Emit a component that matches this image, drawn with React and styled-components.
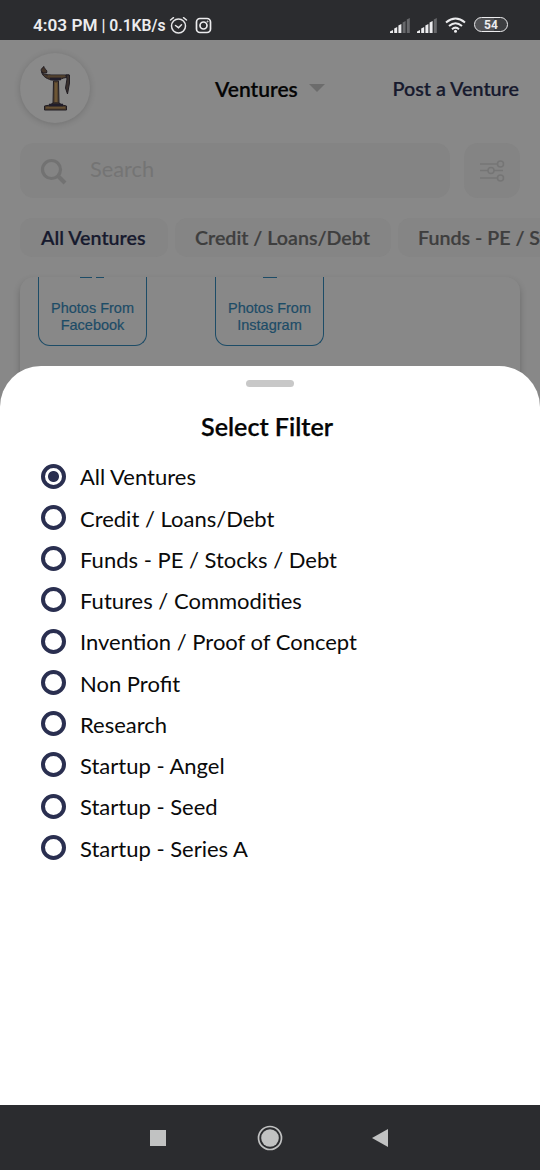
import React from "react";
import styled, { createGlobalStyle } from "styled-components";

const GlobalStyle = createGlobalStyle`
  * { box-sizing: border-box; }
  body { margin: 0; background: #fff; font-family: Lato, "Liberation Sans", sans-serif; }
`;

const Phone = styled.div`
  width: 540px;
  height: 1170px;
  display: flex;
  flex-direction: column;
  overflow: hidden;
`;

const StatusBar = styled.header`
  height: 40px;
  flex: none;
  display: flex;
  align-items: flex-start;
  justify-content: space-between;
  padding: 14px 32px 0 33px;
  background: #2b2c2f;
  color: #ececee;
  font: 600 17px/22px Roboto, sans-serif;
`;

const StatusGroup = styled.div`
  display: flex;
  align-items: center;
  height: 22px;
  white-space: pre;
`;

const Clock = styled.span`
  font-size: 17.2px;
`;

const Speed = styled.span`
  font-size: 15.7px;
  margin: 1px 3px 0 0;
`;

const StatusIcon = styled.svg`
  display: block;
  flex: none;
  margin-left: ${(p) => p.$gap || 0}px;
`;

const Battery = styled.div`
  width: 34px;
  height: 15px;
  margin: -1px 0 0 8px;
  border: 1.7px solid #ececee;
  border-radius: 8px;
  background: linear-gradient(90deg, #515255 0 60%, #3c3d40 60%);
  font: 700 12px/14px Roboto, sans-serif;
  text-align: center;
`;

const Screen = styled.main`
  position: relative;
  flex: 1;
  min-height: 0;
  overflow: hidden;
  background: #888;
`;

const TopBar = styled.div`
  display: flex;
  align-items: center;
  height: 96px;
  padding: 0 20px;
`;

const Logo = styled.div`
  width: 70px;
  height: 70px;
  border-radius: 50%;
  background: #8a8a8a;
  box-shadow: 0 1px 6px rgba(0, 0, 0, 0.17);
`;

const Category = styled.div`
  display: flex;
  align-items: center;
  gap: 11px;
  margin: 1px 0 0 125px;
  color: #050505;
  font-size: 21px;
  font-weight: 600;
  -webkit-text-stroke: 0.2px;

  svg { margin-top: -2px; }
`;

const PostLink = styled.a`
  margin: 1px 1px 0 auto;
  color: #171a2e;
  font-size: 19.7px;
  font-weight: 600;
  -webkit-text-stroke: 0.2px;
`;

const SearchRow = styled.div`
  display: flex;
  gap: 14px;
  padding: 0 20px;
  margin-top: 7px;
`;

const SearchBox = styled.div`
  display: flex;
  align-items: center;
  gap: 23px;
  flex: 1;
  height: 55px;
  padding: 0 20px;
  border-radius: 14px;
  background: #848484;
  color: #747474;
  font-size: 21.8px;
  line-height: 26px;

  span { margin-top: -4px; }
  svg { margin-top: 2px; }
`;

const FilterButton = styled.div`
  display: flex;
  align-items: center;
  justify-content: center;
  width: 56px;
  height: 55px;
  border-radius: 14px;
  background: #848484;
`;

const Chips = styled.div`
  display: flex;
  gap: 7px;
  padding-left: 20px;
  margin-top: 20px;
`;

const Chip = styled.div`
  flex: none;
  width: ${(p) => p.$width}px;
  height: 39px;
  padding-left: ${(p) => (p.$active ? 21 : 20)}px;
  border-radius: 12px;
  background: #858585;
  color: ${(p) => (p.$active ? "#171a2e" : "#3e3e3e")};
  font-size: 19.65px;
  line-height: 40px;
  font-weight: 600;
  -webkit-text-stroke: 0.2px;
  white-space: nowrap;
`;

const Card = styled.section`
  display: flex;
  align-items: flex-start;
  gap: 68px;
  height: 150px;
  margin: 20px 20px 0;
  padding: 0 18px;
  overflow: hidden;
  border-radius: 14px;
  background: #888;
  box-shadow: 0 4px 7px rgba(0, 0, 0, 0.22);
`;

const ImportTile = styled.div`
  display: flex;
  flex-direction: column;
  align-items: center;
  width: 109px;
  height: 69px;
  border: 1.5px solid #1d4c67;
  border-top: 0;
  border-radius: 0 0 12px 12px;
  color: #1d4c67;
  font: 14.5px/17.5px "Liberation Sans", sans-serif;
  -webkit-text-stroke: 0.2px #1d4c67;
  text-align: center;

  svg { display: block; margin-bottom: 20.5px; }
`;

const Sheet = styled.div`
  position: absolute;
  left: 0;
  right: 0;
  top: 326px;
  bottom: 0;
  display: flex;
  flex-direction: column;
  border-radius: 41px 41px 0 0;
  background: #fff;
`;

const Handle = styled.div`
  width: 48px;
  height: 7px;
  margin: 14px auto 0;
  border-radius: 4px;
  background: #c8c8c8;
`;

const SheetTitle = styled.h2`
  margin: 24px 6px 1px 0;
  color: #050505;
  font-size: 25.1px;
  line-height: 30px;
  font-weight: 600;
  -webkit-text-stroke: 0.25px;
  text-align: center;
`;

const Options = styled.div`
  display: flex;
  flex-direction: column;
  padding: 13.5px 0 0 41px;
`;

const Option = styled.label`
  display: flex;
  align-items: center;
  gap: 14px;
  height: 41.25px;
  color: #0a0a0a;
  font-size: 22px;
  line-height: 28px;

  span { margin-top: 2.5px; }
`;

const Radio = styled.i`
  width: 25px;
  height: 25px;
  border: 4px solid #2a2f50;
  border-radius: 50%;
  background: ${(p) => (p.$on ? "radial-gradient(circle, #2a2f50 5px, #fff 6px)" : "#fff")};
`;

const NavBar = styled.nav`
  display: flex;
  align-items: center;
  justify-content: center;
  gap: 89px;
  flex: none;
  height: 65px;
  background: #2b2c2f;
`;

const options = [
  "All Ventures",
  "Credit / Loans/Debt",
  "Funds - PE / Stocks / Debt",
  "Futures / Commodities",
  "Invention / Proof of Concept",
  "Non Profit",
  "Research",
  "Startup - Angel",
  "Startup - Seed",
  "Startup - Series A",
];

function Signal({ level, gap }) {
  return (
    <StatusIcon $gap={gap} width="20" height="15" viewBox="0 0 20 15">
      {[3, 6, 9, 12, 15].map((h, i) => (
        <path
          key={h}
          d={`M${i * 4.2} 15V${15 - h + 1.5}L${i * 4.2 + 3} ${15 - h}V15Z`}
          fill={i < level ? "#ececee" : "#67686b"}
        />
      ))}
    </StatusIcon>
  );
}

function LampColumn() {
  return (
    <svg width="70" height="70" viewBox="0 0 70 70">
      <g stroke="#201c22" strokeWidth="1" strokeLinejoin="round">
        <path d="M23 20C20 17 21 16 24 13.500C24 16.500 28 16.500 26.500 20Z" fill="#44352a" />
        <path d="M21.500 18.500C23 22.500 28 21.500 31 22H49L46 24.500C42 25 41 26.500 38 27H33C28 26.500 22.500 24 21.500 18.500Z" fill="#47392c" />
        <path d="M46 22H49.500V30L47.500 41L45.500 35L47 26Z" fill="#38302d" />
        <path d="M33.500 28H38.500L39 51H33Z" fill="#57452f" />
        <path d="M24.500 53L30 52L33 50H39L42 52L46.500 53V57H24.500Z" fill="#4b3c2d" />
      </g>
      <path d="M30 26H41M29 52H43" stroke="#201d2a" strokeWidth="2.600" />
      <path d="M36 30V49" stroke="#7a603a" strokeWidth="1.300" />
      <path d="M26 54.800H45" stroke="#6d5534" strokeWidth="1.200" />
      <path d="M28 23H45" stroke="#5f4b31" strokeWidth="1" />
    </svg>
  );
}

export default function App() {
  return (
    <Phone>
      <GlobalStyle />
      <StatusBar>
        <StatusGroup>
          <Clock>4:03 PM</Clock>
          <Speed> | 0.1KB/s</Speed>
          <StatusIcon width="19" height="19" viewBox="0 0 19 19" fill="none" stroke="#e6e6e8" strokeWidth="1.500" strokeLinecap="round">
            <circle cx="9.500" cy="10" r="7" />
            <path d="M1.500 4L4.500 1.700M17.500 4L14.500 1.700M6.500 9.500L9.500 11.700L12.500 8.800" />
          </StatusIcon>
          <StatusIcon $gap={7} width="17" height="17" viewBox="0 0 17 17" fill="none" stroke="#ececee" strokeWidth="1.700">
            <rect x="1.500" y="1.500" width="14" height="14" rx="3.500" />
            <circle cx="8.500" cy="8.500" r="3.500" />
            <circle cx="12.600" cy="4.500" r=".5" strokeWidth="1" />
          </StatusIcon>
        </StatusGroup>
        <StatusGroup>
          <Signal level={3} />
          <Signal level={4} gap={7} />
          <StatusIcon $gap={8} width="21" height="16" viewBox="0 0 21 16" fill="none" stroke="#ececee" strokeWidth="2">
            <path d="M1 5.400Q10.500-2.500 20 5.400M4 9Q10.500 3.400 17 9M7 12.200Q10.500 9 14 12.200" />
            <circle cx="10.500" cy="14.200" r="1.500" fill="#ececee" stroke="none" />
          </StatusIcon>
          <Battery>54</Battery>
        </StatusGroup>
      </StatusBar>

      <Screen>
        <TopBar>
          <Logo><LampColumn /></Logo>
          <Category>
            Ventures
            <svg width="16" height="8" viewBox="0 0 16 8"><path d="M0 0H16L8 8Z" fill="#6c6c6c" /></svg>
          </Category>
          <PostLink>Post a Venture</PostLink>
        </TopBar>

        <SearchRow>
          <SearchBox>
            <svg width="27" height="27" viewBox="0 0 27 27" fill="none" stroke="#727272">
              <circle cx="11.500" cy="11.500" r="9" strokeWidth="3.200" />
              <path d="M18 18L25 25" strokeWidth="4" />
            </svg>
            <span>Search</span>
          </SearchBox>
          <FilterButton>
            <svg width="26" height="24" viewBox="0 0 26 24" fill="none" stroke="#757575" strokeWidth="1.500">
              <path d="M1 5H18M1 11.500H9M15 11.500H24M1 19H18" />
              <circle cx="21.500" cy="5" r="3" />
              <circle cx="12" cy="11.500" r="3" />
              <circle cx="21.500" cy="19" r="3" />
            </svg>
          </FilterButton>
        </SearchRow>

        <Chips>
          <Chip $active $width={148}>All Ventures</Chip>
          <Chip $width={216}>Credit / Loans/Debt</Chip>
          <Chip $width={280}>Funds - PE / Stocks / Debt</Chip>
        </Chips>

        <Card>
          <ImportTile>
            <svg width="26" height="2"><path d="M0 .5H12M16 .5H24" stroke="#1d4c67" /></svg>
            Photos From<br />Facebook
          </ImportTile>
          <ImportTile>
            <svg width="14" height="2"><path d="M0 .5H14" stroke="#1d4c67" /></svg>
            Photos From<br />Instagram
          </ImportTile>
        </Card>

        <Sheet>
          <Handle />
          <SheetTitle>Select Filter</SheetTitle>
          <Options>
            {options.map((name, i) => (
              <Option key={name}>
                <Radio $on={i === 0} />
                <span>{name}</span>
              </Option>
            ))}
          </Options>
        </Sheet>
      </Screen>

      <NavBar>
        <svg width="18" height="26"><rect x="0" y="5" width="16" height="16" fill="#c1c2c2" /></svg>
        <svg width="26" height="26">
          <circle cx="13" cy="13" r="11.500" fill="none" stroke="#c1c2c2" strokeWidth="1.700" />
          <circle cx="13" cy="13" r="8.800" fill="#c1c2c2" />
        </svg>
        <svg width="18" height="26"><path d="M0 13L16 4V22Z" fill="#c1c2c2" /></svg>
      </NavBar>
    </Phone>
  );
}
